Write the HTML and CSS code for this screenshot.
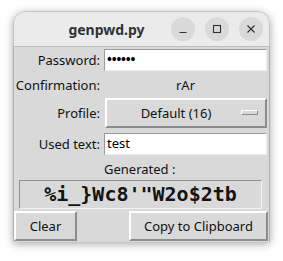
FILE: index.html
```html
<!DOCTYPE html>
<html lang="en">
<head>
    <meta charset="UTF-8">
    <title>genpwd.py</title>
    <link rel="stylesheet" href="styles.css">
</head>
<body>
    <div class="window">
        <div class="titlebar">
            <div class="title">genpwd.py</div>
            <div class="controls">
                <span class="ctl">
                    <svg width="16" height="16" viewBox="0 0 16 16"><path d="M4.5 11.5h7" stroke="#2e3436" stroke-width="1.2" fill="none"/></svg>
                </span>
                <span class="ctl">
                    <svg width="16" height="16" viewBox="0 0 16 16"><rect x="4.5" y="4.5" width="7" height="7" stroke="#2e3436" stroke-width="1.1" fill="none"/></svg>
                </span>
                <span class="ctl">
                    <svg width="16" height="16" viewBox="0 0 16 16"><path d="M4.5 4.5l7 7M11.5 4.5l-7 7" stroke="#2e3436" stroke-width="1.2" fill="none"/></svg>
                </span>
            </div>
        </div>
        <div class="content">
            <div class="form">
                <label class="lbl">Password:</label>
                <div class="entry dots">••••••</div>

                <label class="lbl">Confirmation:</label>
                <div class="confirm">rAr</div>

                <label class="lbl">Profile:</label>
                <div class="menubutton">
                    <span class="mb-text">Default (16)</span>
                    <span class="indicator"></span>
                </div>

                <label class="lbl low">Used text:</label>
                <div class="entry low">test</div>

                <div></div>
                <div class="gen-label">Generated :</div>

                <div class="generated">%i_}Wc8'"W2o$2tb</div>
            </div>
            <div class="buttons">
                <button class="btn clear">Clear</button>
                <button class="btn copy">Copy to Clipboard</button>
            </div>
        </div>
    </div>
</body>
</html>
```

FILE: styles.css
```css
body {
    margin: 0;
    padding: 11px 13px;
    background: #ffffff;
    font-family: "Noto Sans", sans-serif;
    font-size: 13px;
    color: #111;
}
.window {
    width: 257px;
    border-radius: 12px 12px 0 0;
    box-shadow: 0 2px 8px rgba(0, 0, 0, 0.35);
    overflow: hidden;
}
.titlebar {
    height: 36px;
    background: #ebebeb;
    border: 1px solid #c4c4c4;
    border-bottom-color: #bdbdbd;
    border-radius: 12px 12px 0 0;
    display: flex;
    align-items: center;
    box-sizing: border-box;
}
.title {
    flex: 1;
    text-align: center;
    padding-left: 28px;
    font-size: 14px;
    font-weight: bold;
    color: #2e3436;
}
.controls {
    display: flex;
    gap: 10px;
    padding-right: 6px;
}
.ctl {
    width: 24px;
    height: 24px;
    border-radius: 50%;
    background: #d9d9d9;
    display: flex;
    align-items: center;
    justify-content: center;
}
.content {
    background: #d9d9d9;
    border-left: 1px solid #b0b0b0;
    border-right: 1px solid #b0b0b0;
    padding: 2px 0 1px 0;
}
.form {
    display: grid;
    grid-template-columns: 90px 163px;
    grid-template-rows: 22px 27px 30px 27px 25px 29px;
}
.lbl {
    text-align: right;
    padding-right: 4px;
    line-height: 22px;
    align-self: center;
}
.lbl.low {
    align-self: end;
}
.entry {
    height: 22px;
    box-sizing: border-box;
    background: #fff;
    border: 1px solid #9a9a9a;
    border-right-color: #ececec;
    border-bottom-color: #ececec;
    padding-left: 2px;
    line-height: 19px;
    color: #000;
}
.entry.low {
    align-self: end;
}
.dots {
    font-weight: bold;
    letter-spacing: -0.2px;
}
.confirm {
    text-align: center;
    align-self: center;
}
.menubutton {
    margin-left: 1px;
    box-sizing: border-box;
    border: 2px solid #fff;
    border-right-color: #8c8c8c;
    border-bottom-color: #8c8c8c;
    display: flex;
    align-items: center;
}
.mb-text {
    flex: 1;
    text-align: center;
    padding-left: 4px;
}
.indicator {
    width: 17px;
    height: 5px;
    box-sizing: border-box;
    border: 1px solid #fff;
    border-right-color: #8c8c8c;
    border-bottom-color: #8c8c8c;
    margin-right: 7px;
    margin-top: -2px;
}
.gen-label {
    align-self: center;
    padding-top: 2px;
}
.generated {
    grid-column: 1 / 3;
    margin: 0 5px;
    box-sizing: border-box;
    border: 1px solid #8e8e8e;
    border-right-color: #f4f4f4;
    border-bottom-color: #f4f4f4;
    font-family: "DejaVu Sans Mono", monospace;
    font-weight: bold;
    font-size: 20px;
    line-height: 27px;
    text-align: center;
    color: #141414;
}
.buttons {
    display: flex;
    justify-content: space-between;
    margin-top: 2px;
}
.btn {
    height: 30px;
    box-sizing: border-box;
    background: #d9d9d9;
    border: 2px solid #fff;
    border-right-color: #8c8c8c;
    border-bottom-color: #8c8c8c;
    font-family: "Noto Sans", sans-serif;
    font-size: 13px;
    color: #111;
    padding: 0;
}
.btn.clear {
    width: 63px;
}
.btn.copy {
    width: 139px;
    margin-right: 1px;
}
```
